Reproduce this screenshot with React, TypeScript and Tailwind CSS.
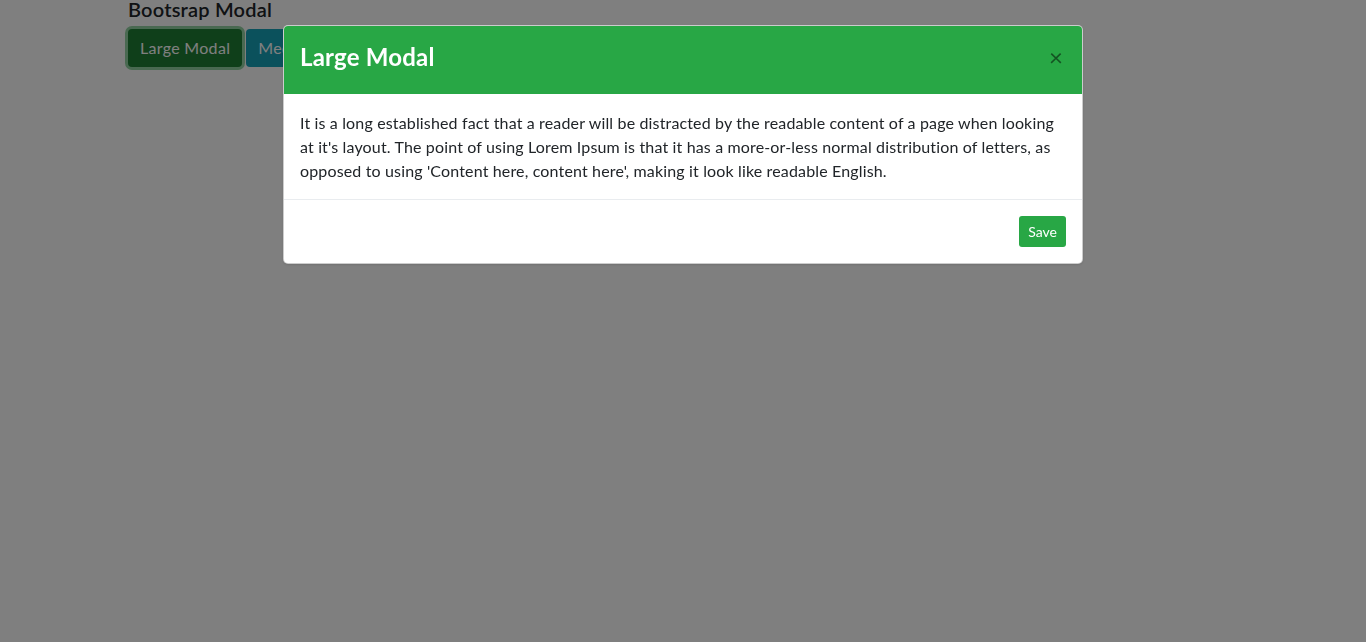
import React from 'react';

export default function App() {
    const font = { fontFamily: 'Lato, "Open Sans", sans-serif' };

    return (
        <div className="relative min-h-screen bg-white text-[#212529]" style={font}>
            {/* Page behind the modal */}
            <div className="mx-auto w-[1140px] px-[15px]">
                <h5 className="text-[20px] font-semibold leading-[18px] mb-[11px] tracking-[0.2px]">Bootsrap Modal</h5>
                <div className="flex gap-[4px]">
                    <button className="h-[38px] rounded-[4px] bg-[#1e7e34] px-3 text-[16px] tracking-[0.3px] text-white ring-[3px] ring-[#28a745]/50">
                        Large Modal
                    </button>
                    <button className="h-[38px] rounded-[4px] bg-[#17a2b8] px-3 text-[16px] tracking-[0.3px] text-white">
                        Medium Modal
                    </button>
                    <button className="h-[38px] rounded-[4px] bg-[#ffc107] px-3 text-[16px] tracking-[0.3px] text-[#212529]">
                        Small Modal
                    </button>
                </div>
            </div>

            {/* Backdrop */}
            <div className="fixed inset-0 bg-black/50" />

            {/* Modal */}
            <div className="fixed inset-0 flex justify-center pt-[25px]">
                <div className="h-fit w-[800px] overflow-hidden rounded-[5px] border border-black/20 bg-white shadow-sm">
                    <div className="flex h-[68px] items-center justify-between bg-[#28a745] px-4 pb-[6px]">
                        <h4 className="text-[24px] font-bold leading-[36px] tracking-[0.2px] text-white">Large Modal</h4>
                        <button className="text-[24px] font-normal leading-none text-black/50 pr-[3px]">×</button>
                    </div>
                    <div className="px-4 pt-[17px] pb-4">
                        <p className="text-[16px] leading-[24px] tracking-[0.15px]">
                            It is a long established fact that a reader will be distracted by the readable content of a page when looking at it's layout. The point of using Lorem Ipsum is that it has a more-or-less normal distribution of letters, as opposed to using 'Content here, content here', making it look like readable English.
                        </p>
                    </div>
                    <div className="flex justify-end border-t border-[#e9ecef] p-4">
                        <button className="h-[31px] rounded-[3px] bg-[#28a745] px-[9px] text-[14px] text-white">
                            Save
                        </button>
                    </div>
                </div>
            </div>
        </div>
    );
}
